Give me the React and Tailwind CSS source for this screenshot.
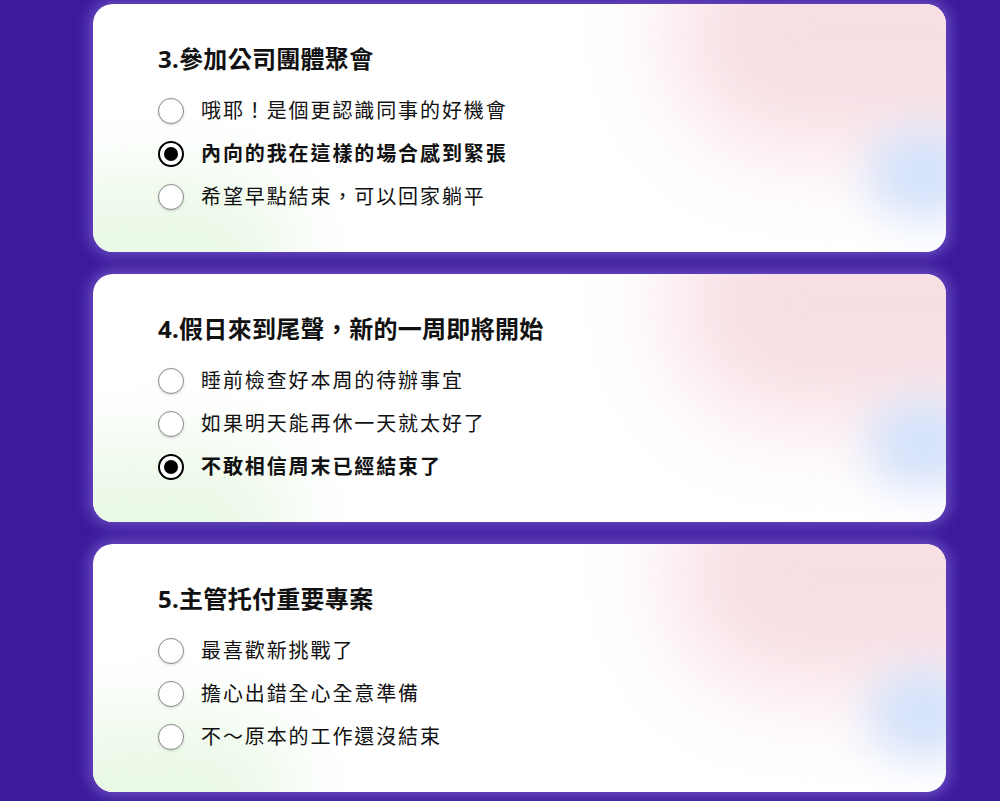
const questions = [
  {
    title: '3.參加公司團體聚會',
    options: ['哦耶！是個更認識同事的好機會', '內向的我在這樣的場合感到緊張', '希望早點結束，可以回家躺平'],
    selected: 1,
  },
  {
    title: '4.假日來到尾聲，新的一周即將開始',
    options: ['睡前檢查好本周的待辦事宜', '如果明天能再休一天就太好了', '不敢相信周末已經結束了'],
    selected: 2,
  },
  {
    title: '5.主管托付重要專案',
    options: ['最喜歡新挑戰了', '擔心出錯全心全意準備', '不～原本的工作還沒結束'],
    selected: -1,
  },
];

function Radio({ checked }) {
  if (checked) {
    return (
      <span className="flex h-[26px] w-[26px] shrink-0 items-center justify-center rounded-full border-2 border-black bg-white">
        <span className="h-[14px] w-[14px] rounded-full bg-black" />
      </span>
    );
  }
  return (
    <span className="h-[26px] w-[26px] shrink-0 rounded-full border border-[#8a8a8a] bg-white shadow-[0_1px_3px_rgba(0,0,0,0.15)]" />
  );
}

function QuestionCard({ q }) {
  return (
    <div className="relative h-[248px] w-[853px] overflow-hidden rounded-[20px] bg-white shadow-[0_0_14px_4px_rgba(150,120,230,0.55)]">
      {/* soft colour blobs */}
      <div className="absolute left-[575px] top-[-90px] h-[240px] w-[420px] rounded-full bg-[#f8dfe4] blur-[45px]" />
      <div className="absolute left-[775px] top-[125px] h-[90px] w-[110px] rounded-full bg-[#d4e2fb] blur-[22px]" />
      <div className="absolute left-[-90px] top-[175px] h-[150px] w-[290px] rounded-full bg-[#e9f8e5] blur-[40px]" />

      <div className="relative pl-[65px] pt-[39px]">
        <h3 className="mb-[14px] text-[24px] font-bold leading-[32px] tracking-[0.3px] text-[#111]">{q.title}</h3>
        {q.options.map((opt, i) => (
          <label key={i} className="flex h-[43px] items-center gap-[17px]">
            <Radio checked={i === q.selected} />
            <span
              className={
                'text-[20px] leading-none tracking-[1.9px] text-[#111] ' + (i === q.selected ? 'font-bold' : 'font-normal')
              }
            >
              {opt}
            </span>
          </label>
        ))}
      </div>
    </div>
  );
}

export default function App() {
  return (
    <div
      className="min-h-[801px] bg-[#3b1b9b] pt-[4px] pl-[93px]"
      style={{ fontFamily: '"Noto Sans", "Noto Sans CJK TC", sans-serif' }}
    >
      <div className="flex flex-col gap-[22px]">
        {questions.map((q, i) => (
          <QuestionCard key={i} q={q} />
        ))}
      </div>
    </div>
  );
}
